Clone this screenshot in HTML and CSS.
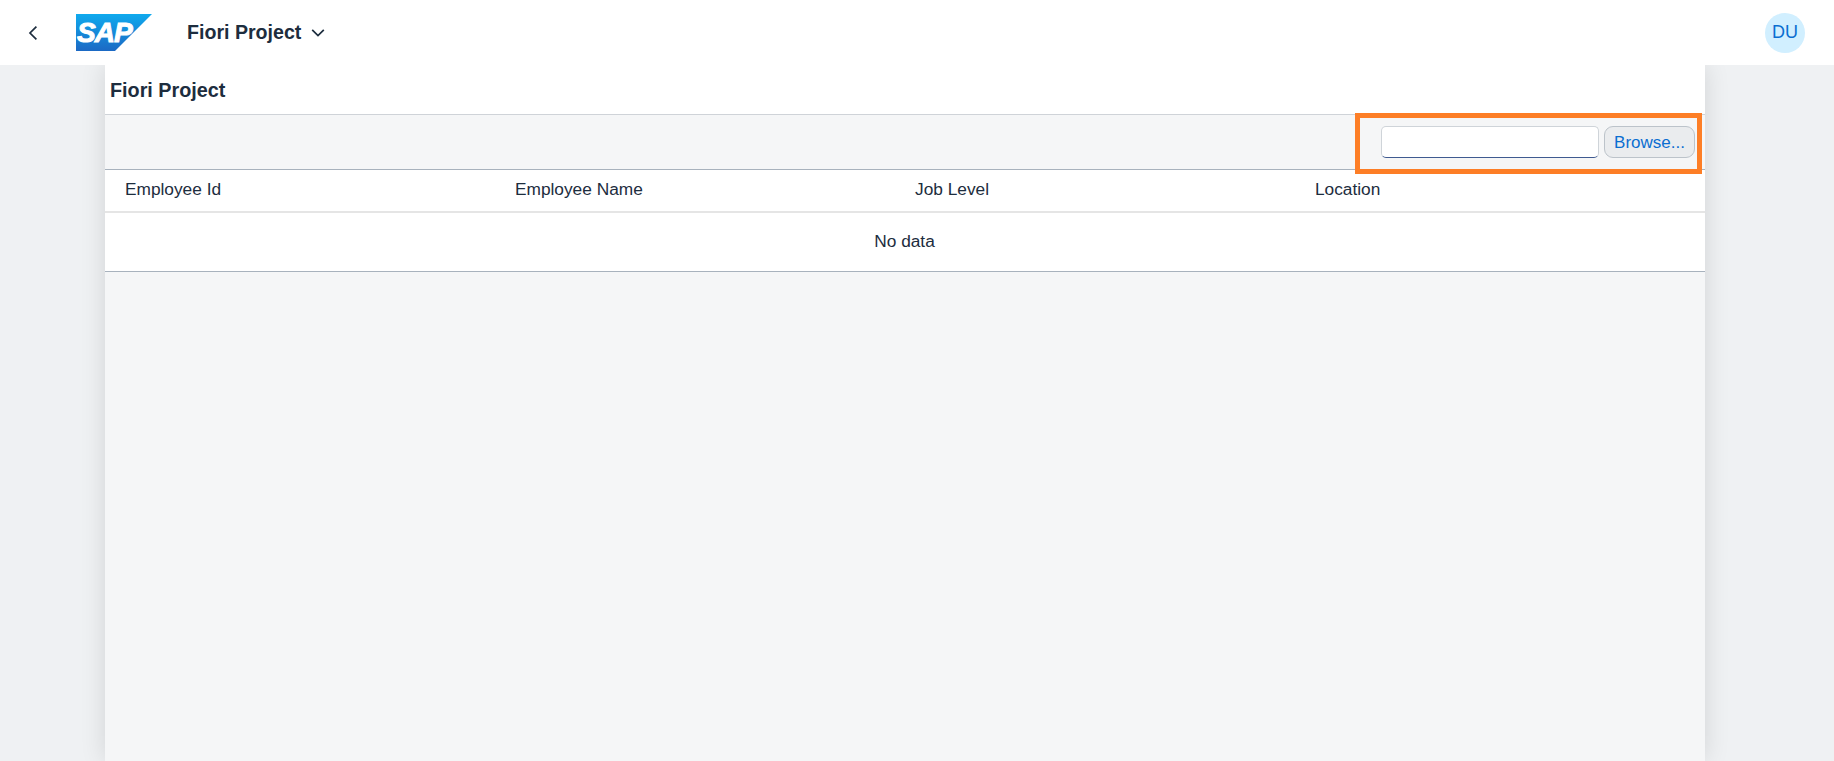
FILE: index.html
```html
<!DOCTYPE html>
<html lang="en">
<head>
<meta charset="utf-8">
<title>Fiori Project</title>
<link rel="stylesheet" href="styles.css">
</head>
<body>
<header class="shell">
  <button class="back" aria-label="Back">
    <svg width="12" height="16" viewBox="0 0 12 16"><path d="M9.4 1.6 3 8l6.4 6.4" fill="none" stroke="#1d2d3e" stroke-width="1.7"/></svg>
  </button>
  <svg class="logo" width="76" height="37" viewBox="0 0 76 37" role="img" aria-label="SAP">
    <defs><linearGradient id="sapg" x1="0" y1="0" x2="0" y2="1"><stop offset="0" stop-color="#0faaee"/><stop offset="1" stop-color="#1c69c4"/></linearGradient></defs>
    <polygon points="0,0 76,0 39,37 0,37" fill="url(#sapg)"/>
    <text class="logo-text" x="1" y="28">SAP</text>
  </svg>
  <div class="app-title">
    <span>Fiori Project</span>
    <svg width="14" height="10" viewBox="0 0 14 10"><path d="M1.2 1.8 7 7.6l5.8-5.8" fill="none" stroke="#1d2d3e" stroke-width="1.7"/></svg>
  </div>
  <div class="avatar">DU</div>
</header>
<div class="stage">
  <main class="panel">
    <h1 class="page-title">Fiori Project</h1>
    <div class="toolbar">
      <div class="file-input"></div>
      <button class="browse">Browse...</button>
      <div class="highlight"></div>
    </div>
    <div class="columns">
      <div>Employee Id</div>
      <div>Employee Name</div>
      <div>Job Level</div>
      <div>Location</div>
    </div>
    <div class="no-data">No data</div>
  </main>
</div>
</body>
</html>
```
FILE: styles.css
```css
* { box-sizing: border-box; }
html, body { margin: 0; height: 100%; overflow: hidden; }
body { font-family: "Liberation Sans", Arial, sans-serif; color: #1d2d3e; background: #eff1f3; }
.shell { position: relative; z-index: 1; height: 65px; background: #fff; display: flex; align-items: center; padding-left: 27px; padding-right: 29px; }
.back { width: 13px; height: 16px; padding: 0; border: 0; background: none; display: flex; align-items: center; }
.logo { margin-left: 36px; flex: none; }
.logo-text { font: italic 700 28px "Liberation Sans", Arial, sans-serif; fill: #fff; stroke: #fff; stroke-width: 1px; letter-spacing: -.9px; }
.app-title { margin-left: 35px; display: flex; align-items: center; gap: 10px; font-size: 19.6px; font-weight: 700; }
.avatar { margin-left: auto; width: 40px; height: 40px; border-radius: 50%; background: #d1efff; color: #0a6ed1; font-size: 18px; display: flex; align-items: center; justify-content: center; }
.stage { height: 696px; padding-left: 105px; padding-right: 129px; }
.panel { height: 100%; width: 1600px; background: #f5f6f7; box-shadow: 0 0 24px rgba(0,0,0,.12); }
.page-title { margin: 0; height: 50px; background: #fff; border-bottom: 1px solid #cfd3d8; padding-left: 5px; padding-top: 2px; font-size: 19.8px; font-weight: 700; display: flex; align-items: center; }
.toolbar { position: relative; height: 55px; border-bottom: 1px solid #a8b2bd; display: flex; justify-content: flex-end; align-items: center; gap: 5px; padding-right: 10px; }
.file-input { width: 218px; height: 32px; background: #fff; border: 1px solid #cfd4d9; border-bottom: 1px solid #3f5a90; border-radius: 5px; }
.browse { width: 91px; height: 32px; padding: 1px 0 0; background: #eaecee; border: 1px solid #bcc3ca; border-radius: 9px; color: #0a6ed1; font: 17px "Liberation Sans", Arial, sans-serif; }
.highlight { position: absolute; left: 1250px; top: -2px; width: 347px; height: 61px; border: 5px solid #fd7e26; }
.columns { height: 43px; padding: 0 0 2px 20px; background: #fff; border-bottom: 2px solid #e5e5e5; display: grid; grid-template-columns: 390px 400px 400px 1fr; align-items: center; font-size: 17.3px; }
.no-data { height: 59px; padding: 0 1px 2px 0; background: #fff; border-bottom: 1px solid #a8b2bd; display: flex; align-items: center; justify-content: center; font-size: 17.3px; }
```
